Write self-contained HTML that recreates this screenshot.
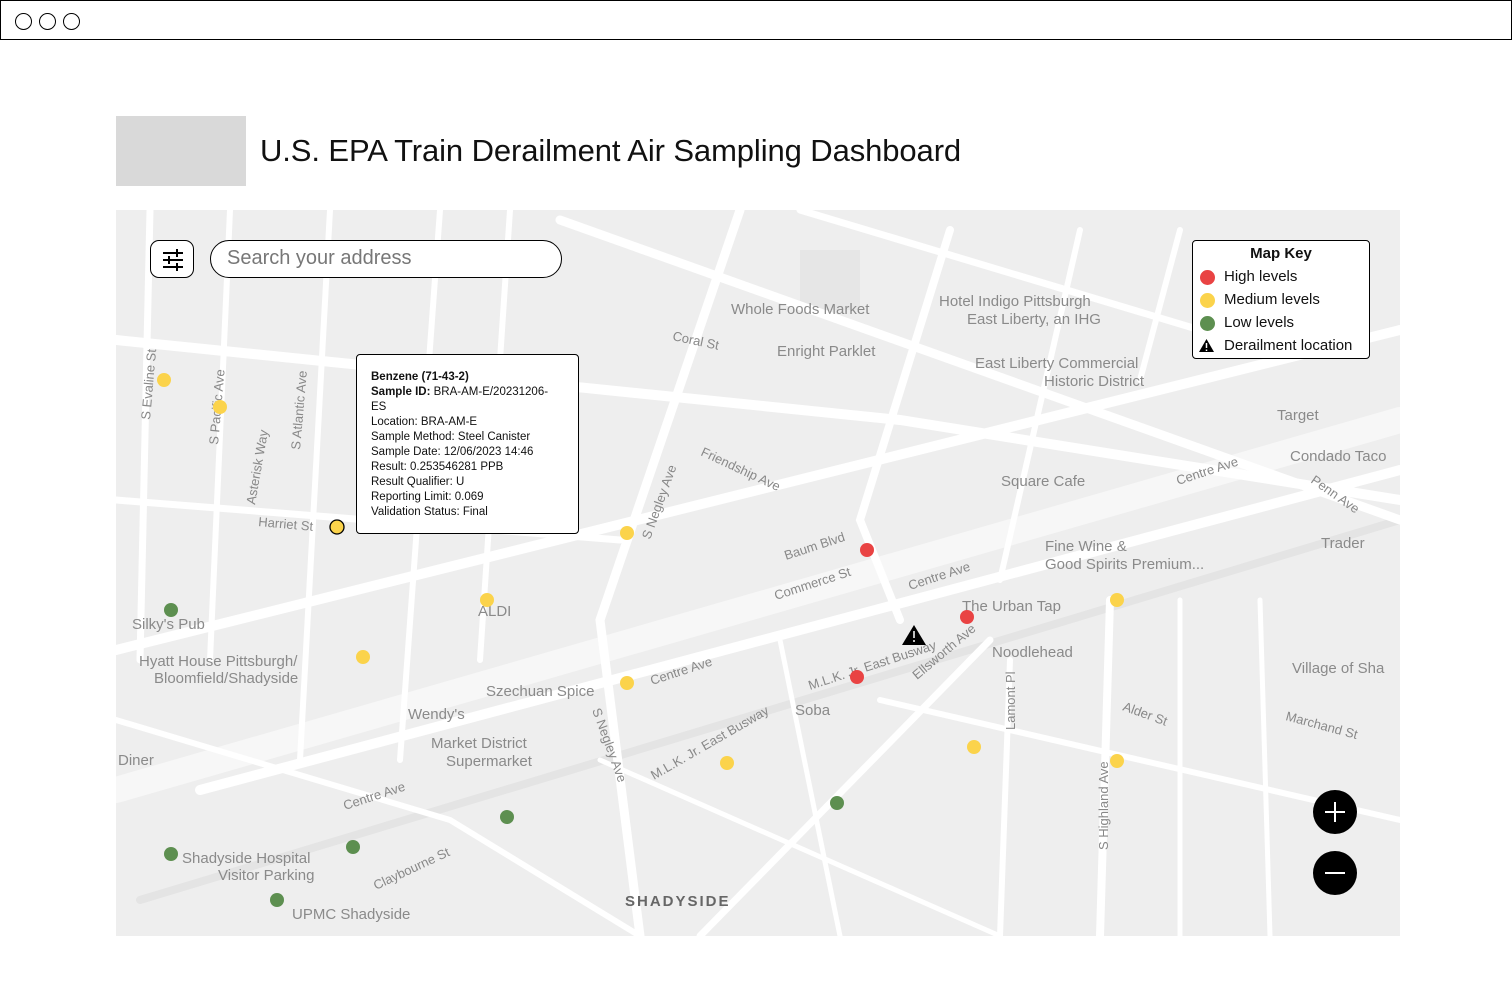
<!DOCTYPE html>
<html><head><meta charset="utf-8"><style>
*{margin:0;padding:0;box-sizing:border-box}
body{width:1512px;height:982px;background:#fff;font-family:"Liberation Sans",Arial,sans-serif;position:relative;overflow:hidden}
.top{position:absolute;left:0;top:0;width:1512px;height:40px;border:1px solid #000}
.dot{position:absolute;top:12px;width:17px;height:17px;border:1.5px solid #000;border-radius:50%}
.logo{position:absolute;left:116px;top:116px;width:130px;height:70px;background:#d9d9d9}
h1{position:absolute;left:260px;top:133px;font-size:31px;letter-spacing:-0.1px;font-weight:normal;color:#111}
.map{position:absolute;left:116px;top:210px;width:1284px;height:726px;background:#eeeeee;overflow:hidden}
.filter{position:absolute;left:150px;top:240px;width:44px;height:38px;border:1.5px solid #000;border-radius:9px;background:#fff}
.search{position:absolute;left:210px;top:240px;width:352px;height:38px;border:1.5px solid #000;border-radius:19px;background:#fff;font-size:20px;color:#777;padding:6px 0 0 16px}
.tip{position:absolute;left:356px;top:354px;width:223px;height:180px;background:#fff;border:1.2px solid #000;border-radius:4px;padding:15px 0 0 14px;font-size:11.5px;line-height:15px;color:#111}
.key{position:absolute;left:1192px;top:240px;width:178px;height:119px;background:#fff;border:1.2px solid #000;border-radius:4px;font-size:15px;color:#111}
.key .t{font-weight:bold;text-align:center;margin-top:4px;font-size:15px}
.key .r{position:absolute;left:31px}
.kd{position:absolute;left:7px;width:15px;height:15px;border-radius:50%}
</style></head><body>
<div class="top"><div class="dot" style="left:14px"></div><div class="dot" style="left:38px"></div><div class="dot" style="left:62px"></div></div>
<div class="logo"></div>
<h1>U.S. EPA Train Derailment Air Sampling Dashboard</h1>
<div class="map">
<svg width="1284" height="726" viewBox="116 210 1284 726" xmlns="http://www.w3.org/2000/svg">
<rect x="800" y="250" width="60" height="60" fill="#e6e6e6"/>
<g stroke="#fff" stroke-linecap="round" fill="none">
<path d="M116 790 L1400 420" stroke-width="26" stroke="#f7f7f7"/>
<path d="M116 650 L1400 330" stroke-width="10"/>
<path d="M200 790 L1400 470" stroke-width="10"/>
<path d="M140 900 L1400 520" stroke-width="8" stroke="#e4e4e4"/>
<path d="M116 340 L900 420 L1400 500" stroke-width="10"/>
<path d="M116 500 L620 540" stroke-width="7"/>
<path d="M560 220 L1400 520" stroke-width="9"/>
<path d="M800 210 L1200 330" stroke-width="7"/>
<path d="M150 210 L140 660" stroke-width="7"/>
<path d="M230 210 L210 660" stroke-width="6"/>
<path d="M330 210 L300 760" stroke-width="6"/>
<path d="M440 210 L400 760" stroke-width="6"/>
<path d="M510 210 L480 660" stroke-width="6"/>
<path d="M740 210 L600 620 L640 936" stroke-width="9"/>
<path d="M950 230 L860 520 L900 620" stroke-width="8"/>
<path d="M1080 230 L1000 580" stroke-width="6"/>
<path d="M1180 230 L1140 380" stroke-width="6"/>
<path d="M990 640 L700 936" stroke-width="7"/>
<path d="M1010 660 L1000 936" stroke-width="6"/>
<path d="M1110 600 L1100 936" stroke-width="8"/>
<path d="M1180 600 L1180 936" stroke-width="5"/>
<path d="M1260 600 L1270 936" stroke-width="5"/>
<path d="M116 720 L450 820 L640 936" stroke-width="6"/>
<path d="M880 700 L1400 820" stroke-width="6"/>
<path d="M600 760 L1000 936" stroke-width="5"/>
<path d="M780 640 L840 936" stroke-width="5"/>
</g>
<g fill="#8a8a8a" font-family="Liberation Sans,sans-serif" font-size="15">
<text x="731" y="314">Whole Foods Market</text>
<text x="939" y="306">Hotel Indigo Pittsburgh</text>
<text x="967" y="324">East Liberty, an IHG</text>
<text x="777" y="356">Enright Parklet</text>
<text x="975" y="368">East Liberty Commercial</text>
<text x="1044" y="386">Historic District</text>
<text x="1277" y="420">Target</text>
<text x="1290" y="461">Condado Taco</text>
<text x="1001" y="486">Square Cafe</text>
<text x="1045" y="551">Fine Wine &amp;</text>
<text x="1045" y="569">Good Spirits Premium...</text>
<text x="1321" y="548">Trader</text>
<text x="962" y="611">The Urban Tap</text>
<text x="992" y="657">Noodlehead</text>
<text x="1292" y="673">Village of Sha</text>
<text x="795" y="715">Soba</text>
<text x="478" y="616">ALDI</text>
<text x="486" y="696">Szechuan Spice</text>
<text x="408" y="719">Wendy's</text>
<text x="431" y="748">Market District</text>
<text x="446" y="766">Supermarket</text>
<text x="132" y="629">Silky's Pub</text>
<text x="139" y="666">Hyatt House Pittsburgh/</text>
<text x="154" y="683">Bloomfield/Shadyside</text>
<text x="118" y="765">Diner</text>
<text x="182" y="863">Shadyside Hospital</text>
<text x="218" y="880">Visitor Parking</text>
<text x="292" y="919">UPMC Shadyside</text>
<text x="625" y="906" font-weight="bold" letter-spacing="2" fill="#666">SHADYSIDE</text>
</g>
<g fill="#888" font-family="Liberation Sans,sans-serif" font-size="13">
<text transform="translate(652,685) rotate(-18)">Centre Ave</text>
<text transform="translate(910,590) rotate(-18)">Centre Ave</text>
<text transform="translate(1178,485) rotate(-18)">Centre Ave</text>
<text transform="translate(345,810) rotate(-18)">Centre Ave</text>
<text transform="translate(786,560) rotate(-18)">Baum Blvd</text>
<text transform="translate(776,600) rotate(-18)">Commerce St</text>
<text transform="translate(810,690) rotate(-18)">M.L.K. Jr. East Busway</text>
<text transform="translate(654,780) rotate(-30)">M.L.K. Jr. East Busway</text>
<text transform="translate(700,455) rotate(25)">Friendship Ave</text>
<text transform="translate(258,526) rotate(5)">Harriet St</text>
<text transform="translate(672,340) rotate(12)">Coral St</text>
<text transform="translate(917,680) rotate(-40)">Ellsworth Ave</text>
<text transform="translate(1122,710) rotate(20)">Alder St</text>
<text transform="translate(376,890) rotate(-25)">Claybourne St</text>
<text transform="translate(650,540) rotate(-70)">S Negley Ave</text>
<text transform="translate(592,710) rotate(70)">S Negley Ave</text>
<text transform="translate(150,420) rotate(-85)">S Evaline St</text>
<text transform="translate(218,445) rotate(-85)">S Pacific Ave</text>
<text transform="translate(300,450) rotate(-85)">S Atlantic Ave</text>
<text transform="translate(255,505) rotate(-80)">Asterisk Way</text>
<text transform="translate(1108,850) rotate(-90)">S Highland Ave</text>
<text transform="translate(1015,730) rotate(-90)">Lamont Pl</text>
<text transform="translate(1310,482) rotate(35)">Penn Ave</text>
<text transform="translate(1285,720) rotate(15)">Marchand St</text>
</g>
</svg>
</div>
<div class="filter"><svg width="44" height="38" viewBox="0 0 44 38"><g stroke="#000" stroke-width="2"><path d="M12 12h20M12 19h20M12 26h20"/><path d="M26 8v8M18 15v8M26 22v8"/></g></svg></div>
<div class="search">Search your address</div>
<div class="tip"><b>Benzene (71-43-2)</b><br><b>Sample ID:</b> BRA-AM-E/20231206-<br>ES<br>Location: BRA-AM-E<br>Sample Method: Steel Canister<br>Sample Date: 12/06/2023 14:46<br>Result: 0.253546281 PPB<br>Result Qualifier: U<br>Reporting Limit: 0.069<br>Validation Status: Final</div>
<div class="key"><div class="t">Map Key</div>
<div class="kd" style="top:29px;background:#e94343"></div><div class="r" style="top:27px">High levels</div>
<div class="kd" style="top:52px;background:#fbd34b"></div><div class="r" style="top:50px">Medium levels</div>
<div class="kd" style="top:75px;background:#5d8f50"></div><div class="r" style="top:73px">Low levels</div>
<svg style="position:absolute;left:5px;top:97px" width="17" height="15"><path d="M8.5 1L16 14H1z" fill="#000"/><path d="M8.5 5v5M8.5 11.5v1.5" stroke="#fff" stroke-width="1.5"/></svg><div class="r" style="top:96px">Derailment location</div></div>
<svg style="position:absolute;left:0;top:0" width="1512" height="982">
<g fill="#fbd34b"><circle cx="164" cy="380" r="7"/><circle cx="220" cy="407" r="7"/><circle cx="627" cy="533" r="7"/><circle cx="487" cy="600" r="7"/><circle cx="363" cy="657" r="7"/><circle cx="627" cy="683" r="7"/><circle cx="727" cy="763" r="7"/><circle cx="974" cy="747" r="7"/><circle cx="1117" cy="600" r="7"/><circle cx="1117" cy="761" r="7"/><circle cx="337" cy="527" r="7" stroke="#000" stroke-width="1.3"/></g>
<g fill="#5d8f50"><circle cx="171" cy="610" r="7"/><circle cx="171" cy="854" r="7"/><circle cx="353" cy="847" r="7"/><circle cx="277" cy="900" r="7"/><circle cx="507" cy="817" r="7"/><circle cx="837" cy="803" r="7"/></g>
<g fill="#e94343"><circle cx="867" cy="550" r="7"/><circle cx="967" cy="617" r="7"/><circle cx="857" cy="677" r="7"/></g>
<path d="M914 625L926 645H902z" fill="#000"/><path d="M914 631v7M914 640v2" stroke="#fff" stroke-width="1.5"/>
<circle cx="1335" cy="812" r="22" fill="#000"/><path d="M1325 812h20M1335 802v20" stroke="#fff" stroke-width="2"/>
<circle cx="1335" cy="873" r="22" fill="#000"/><path d="M1325 873h20" stroke="#fff" stroke-width="2"/>
</svg>
</body></html>
